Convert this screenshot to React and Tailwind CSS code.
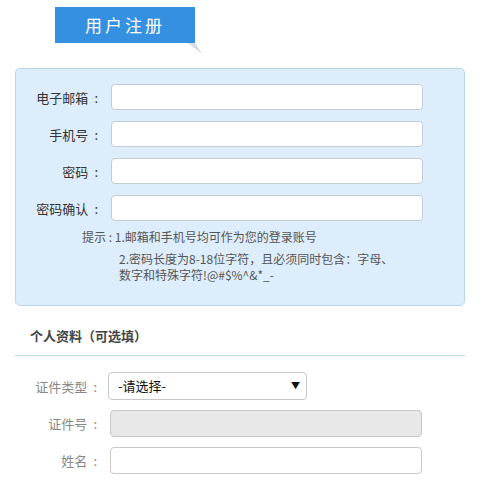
export default function App() {
  const font = { fontFamily: '"Noto Sans CJK SC", "Noto Sans", sans-serif' };
  const rows1 = ["电子邮箱", "手机号", "密码", "密码确认"];
  const Label = ({ t, c }) => (
    <div className={`w-[82px] text-right text-[13px] leading-none ${c}`}>
      {t}
      <span className="ml-[6px]">:</span>
    </div>
  );
  return (
    <div className="w-[492px] h-[493px] bg-white overflow-hidden" style={font}>
      <div className="relative ml-[55px] mt-[7px] w-[140px] h-[36px]">
        <div className="w-[140px] h-[36px] bg-[#3590e2] text-white text-[17px] tracking-[3px] flex items-center justify-center">
          用户注册
        </div>
        <svg className="absolute left-[133px] top-[36px]" width="16" height="14" viewBox="0 0 16 14">
          <polygon points="0,0 7,0 14,11" fill="#d6dde4" />
        </svg>
      </div>

      <div className="ml-[15px] mt-[25px] w-[450px] h-[238px] border border-[#b9d6ea] rounded-[5px] bg-[#deedfb] pt-[15px]">
        <div className="flex flex-col gap-[11px]">
          {rows1.map((l) => (
            <div key={l} className="flex items-center h-[26px]">
              <Label t={l} c="text-[#333]" />
              <div className="ml-[13px] w-[312px] h-[26px] bg-white border border-[#c3ccd4] rounded-[4px]" />
            </div>
          ))}
        </div>
        <div className="ml-[66px] mt-[8px] text-[12px] text-[#555] leading-[16px]">
          <div className="flex">
            <span>提示 :&nbsp;</span>
            <span>1.邮箱和手机号均可作为您的登录账号</span>
          </div>
          <div className="ml-[37px] mt-[6px] w-[290px]">
            2.密码长度为8-18位字符，且必须同时包含：字母、<br />数字和特殊字符!@#$%^&amp;*_-
          </div>
        </div>
      </div>

      <div className="ml-[15px] w-[450px] mt-[15px]">
        <div className="pl-[15px] h-[30px] flex items-center text-[13px] font-bold text-[#444]">个人资料（可选填）</div>
        <div className="mt-[4px] h-px bg-[#b8d8e2]" />
        <div className="mt-[16px] flex items-center h-[28px]">
          <Label t="证件类型" c="text-[#888]" />
          <div className="ml-[11px] w-[199px] h-[28px] bg-white border border-[#c8c8c8] rounded-[4px] flex items-center justify-between pl-[9px] pr-[6px]">
            <span className="text-[13px] text-[#111]">-请选择-</span>
            <span className="text-[9px] text-[#111]">▼</span>
          </div>
        </div>
        <div className="mt-[10px] flex items-center h-[27px]">
          <Label t="证件号" c="text-[#888]" />
          <div className="ml-[13px] w-[312px] h-[27px] bg-[#e8e8e8] border border-[#c8c8c8] rounded-[4px]" />
        </div>
        <div className="mt-[10px] flex items-center h-[27px]">
          <Label t="姓名" c="text-[#888]" />
          <div className="ml-[13px] w-[312px] h-[27px] bg-white border border-[#c8c8c8] rounded-[4px]" />
        </div>
      </div>
    </div>
  );
}
